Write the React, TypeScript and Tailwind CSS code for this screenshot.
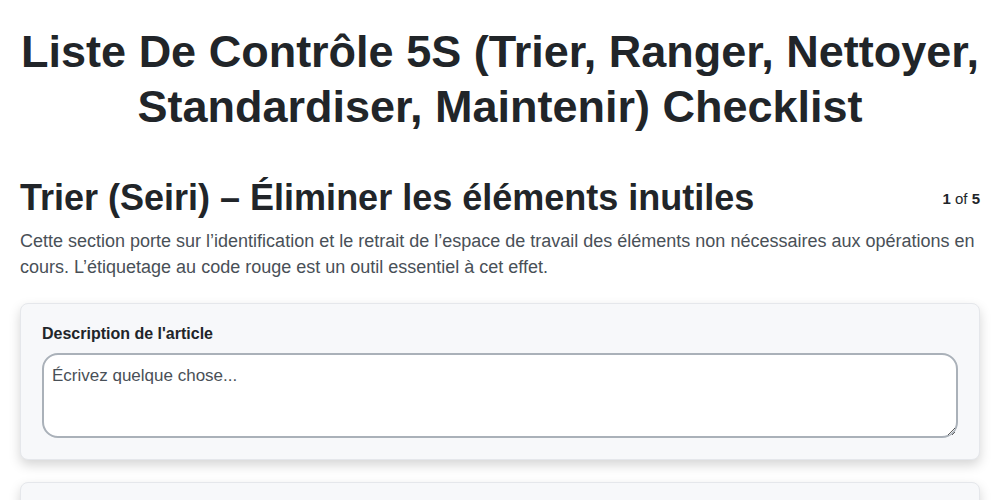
export default function App() {
  return (
    <main className="px-5 pt-6 font-['Liberation_Sans',Arial,sans-serif] text-[#212529] bg-white min-h-screen">
      <h1 className="text-center text-[45px] font-bold leading-[55px]">
        Liste De Contrôle 5S (Trier, Ranger, Nettoyer, Standardiser, Maintenir) Checklist
      </h1>

      <section className="mt-[42px]">
        <div className="flex items-start justify-between">
          <h2 className="text-[36px] font-bold leading-[44px]">
            Trier (Seiri) – Éliminer les éléments inutiles
          </h2>
          <div className="text-[15px] mt-[12px]">
            <span className="font-bold">1</span> of <span className="font-bold">5</span>
          </div>
        </div>
        <p className="mt-2 text-[18px] leading-[26px] text-[#495057]">
          Cette section porte sur l’identification et le retrait de l’espace de travail des éléments non nécessaires aux opérations en cours. L’étiquetage au code rouge est un outil essentiel à cet effet.
        </p>

        <div className="mt-[23px] flex flex-col gap-[22px]">
          <div className="rounded-lg border border-[#e5e7eb] bg-[#f7f8fa] px-[21px] pt-5 pb-[21px] shadow-[0_5px_12px_rgba(0,0,0,0.17)]">
            <label className="block text-[16px] leading-5 font-bold mb-[9px]">Description de l'article</label>
            <textarea
              placeholder="Écrivez quelque chose..."
              className="block w-full h-[85px] rounded-2xl border-2 border-[#aab1b9] bg-white px-2 pt-[9px] pb-3 text-[17px] leading-6 placeholder:text-[#495057] outline-none"
            />
          </div>
          <div className="rounded-lg border border-[#e5e7eb] bg-[#f7f8fa] h-[150px] shadow-[0_5px_12px_rgba(0,0,0,0.17)]" />
        </div>
      </section>
    </main>
  );
}
